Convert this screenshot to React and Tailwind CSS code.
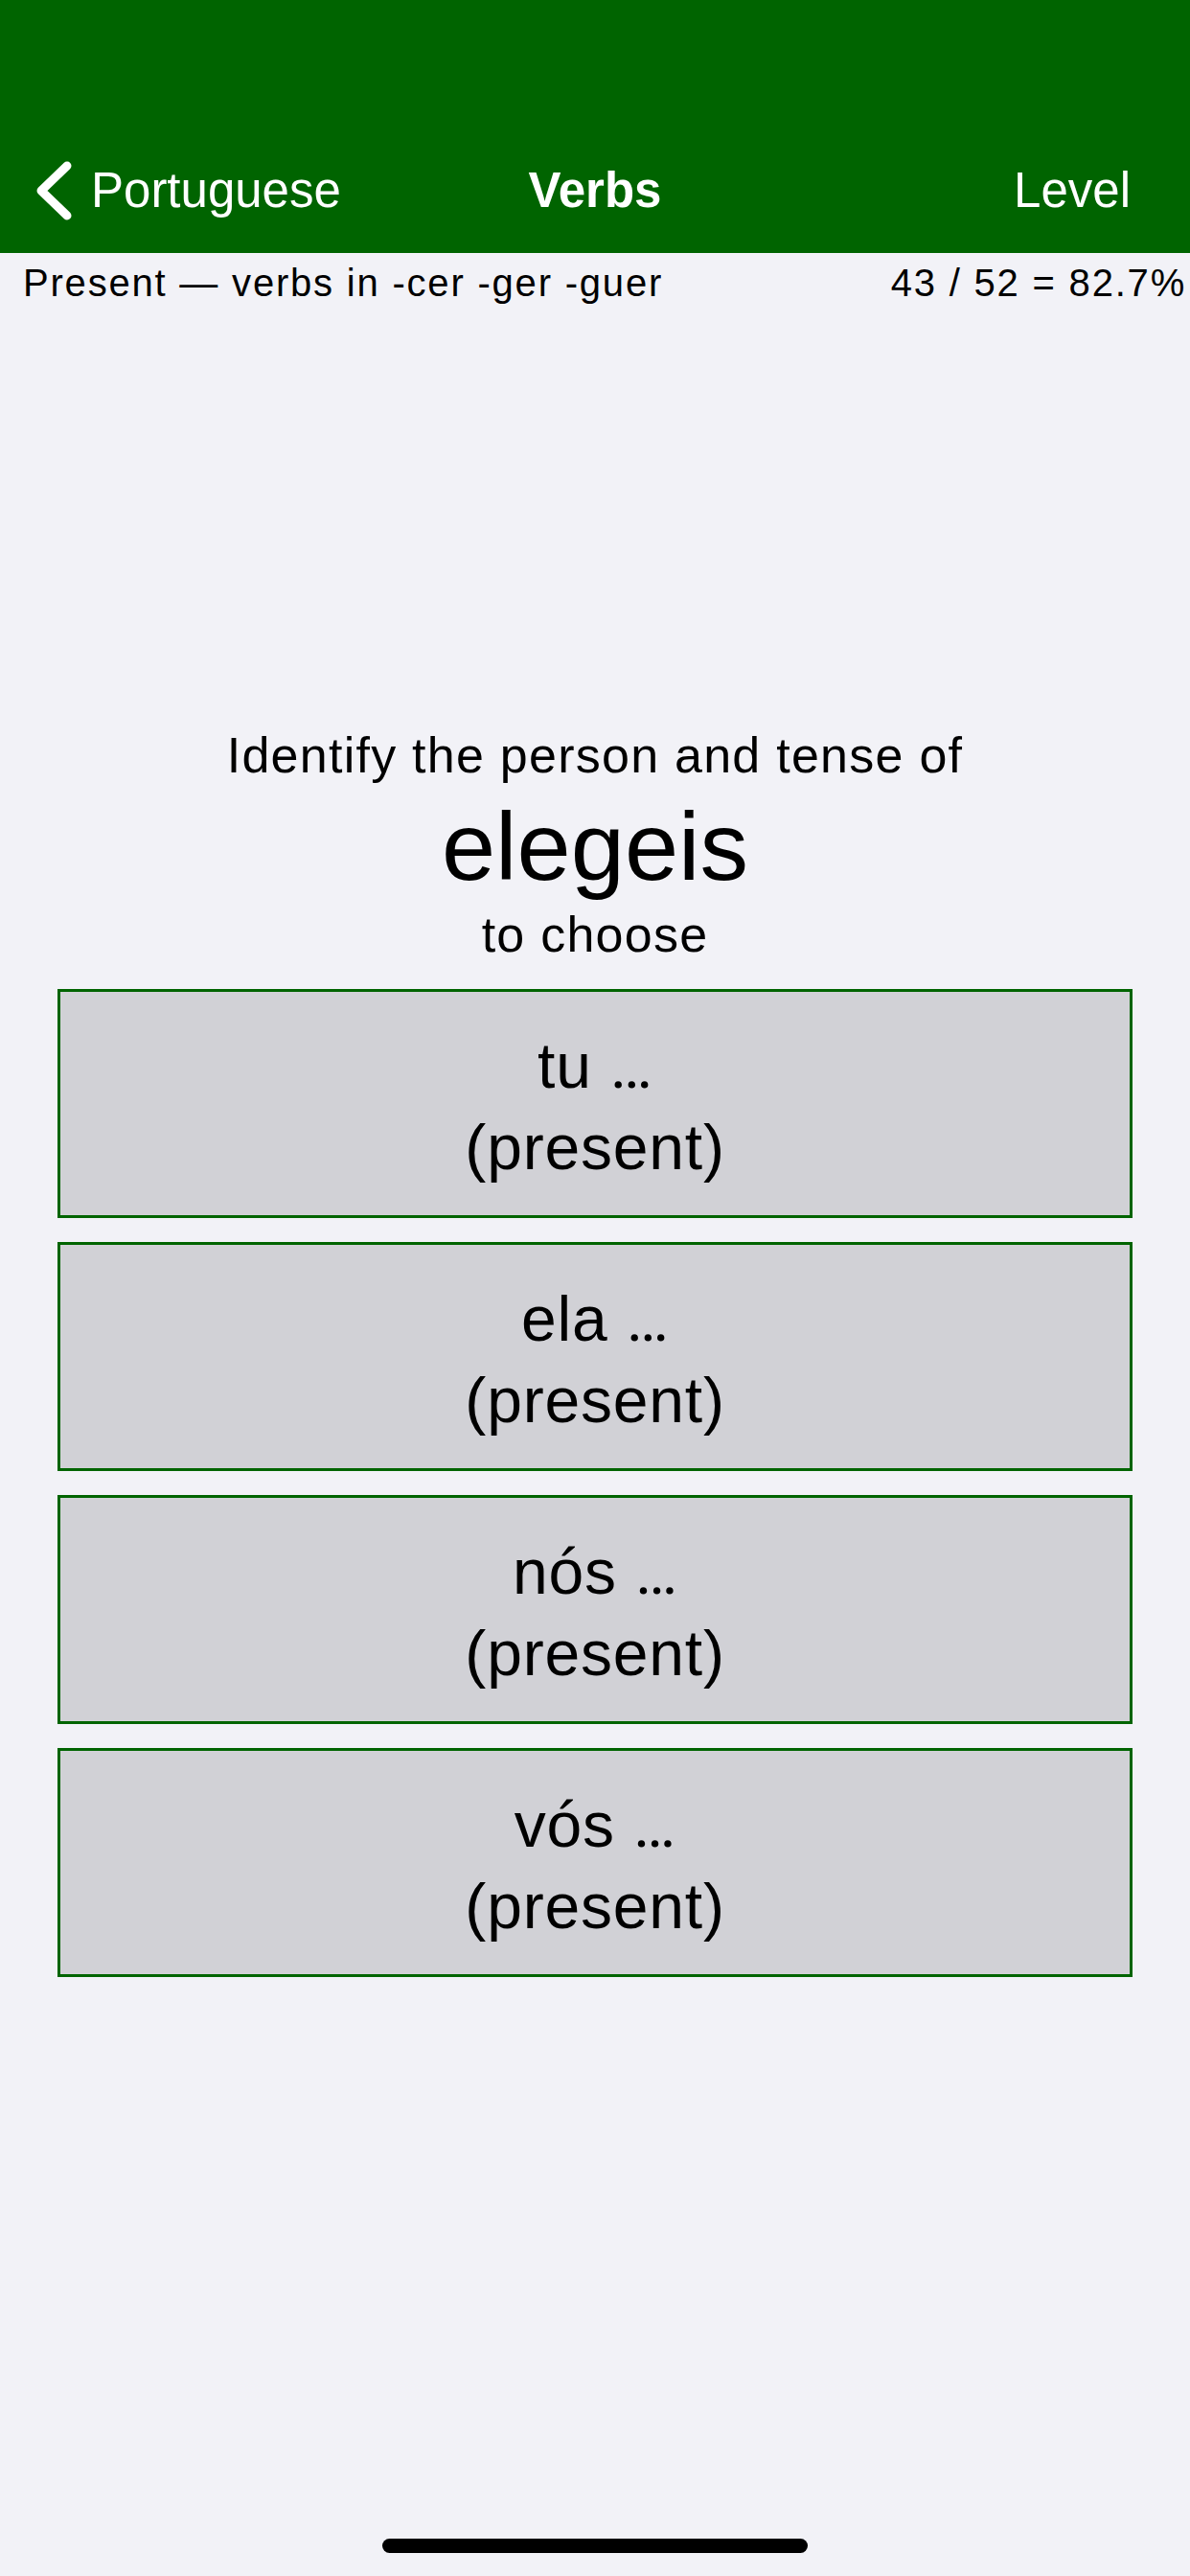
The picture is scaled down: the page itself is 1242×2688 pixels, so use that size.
import React from 'react';

const choices = [
  { person: 'tu', tense: 'present' },
  { person: 'ela', tense: 'present' },
  { person: 'nós', tense: 'present' },
  { person: 'vós', tense: 'present' },
];

const ChoiceButton = ({ person, tense }) => (
  <button className="h-[239px] w-full flex flex-col items-center justify-center pt-[5px] bg-[#d1d1d6] border-[3px] border-[#006400] text-black text-[66px] leading-[84px] tracking-[0.8px]">
    <span>
      {person} <span className="font-['Roboto',sans-serif] tracking-normal">…</span>
    </span>
    <span>({tense})</span>
  </button>
);

const App = () => {
  return (
    <div className="min-h-[2688px] flex flex-col bg-[#f2f2f7] font-['Liberation_Sans',Arial,sans-serif] text-black">
      {/* Nav bar */}
      <div className="h-[264px] bg-[#006400] flex items-end pb-[36px] text-white">
        <div className="w-full h-[60px] grid grid-cols-[1fr_auto_1fr] items-center text-[51px] leading-[60px]">
          <div className="flex items-center pl-[38px]">
            <svg width="37" height="62" viewBox="0 0 37 62" fill="none">
              <polyline points="32,5 5,31 32,57" stroke="white" strokeWidth="9" strokeLinecap="round" strokeLinejoin="round" />
            </svg>
            <span className="ml-[20px]">Portuguese</span>
          </div>
          <div className="font-bold">Verbs</div>
          <div className="text-right pr-[62px]">Level</div>
        </div>
      </div>

      {/* Sub header */}
      <div className="flex justify-between pt-[7px] pl-[24px] pr-[4px] text-[40px] leading-[48px] tracking-[1.8px]">
        <span>Present — verbs in -cer -ger -guer</span>
        <span>43 / 52 = 82.7%</span>
      </div>

      {/* Question */}
      <div className="mt-[438px] flex flex-col items-center text-center">
        <p className="text-[52px] leading-[62px] tracking-[1.25px]">Identify the person and tense of</p>
        <p className="mt-[8px] text-[101px] leading-[112px]">elegeis</p>
        <p className="mt-[5px] text-[52px] leading-[62px] tracking-[1.25px]">to choose</p>
      </div>

      <div className="mt-[26px] px-[60px] flex flex-col gap-[25px]">
        {choices.map(c => (
          <ChoiceButton key={c.person} person={c.person} tense={c.tense} />
        ))}
      </div>

      <div className="flex-1" />
      <div className="flex justify-center pb-[24px]">
        <div className="w-[444px] h-[15px] rounded-full bg-black" />
      </div>
    </div>
  );
};

export default App;
